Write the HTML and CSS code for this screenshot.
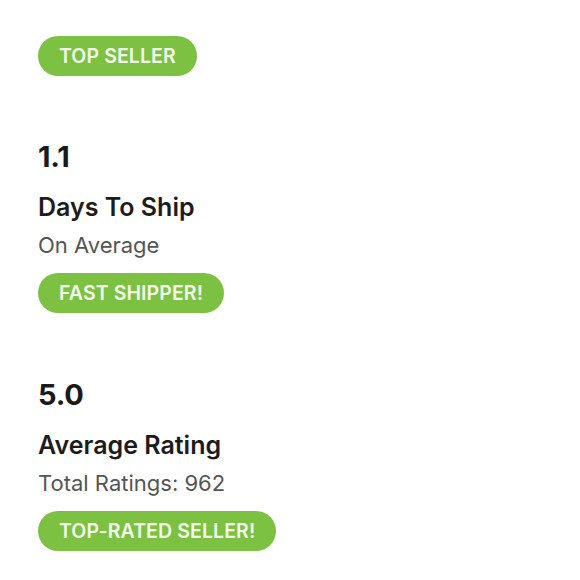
FILE: index.html
```html
<!DOCTYPE html>
<html>
<head>
<meta charset="utf-8">
<link rel="stylesheet" href="styles.css">
</head>
<body>
<div class="page">
  <div class="badge b1">TOP SELLER</div>
  <section class="stat">
    <div class="num">1.1</div>
    <div class="title">Days To Ship</div>
    <div class="sub">On Average</div>
    <div class="badge">FAST SHIPPER!</div>
  </section>
  <section class="stat">
    <div class="num">5.0</div>
    <div class="title">Average Rating</div>
    <div class="sub">Total Ratings: 962</div>
    <div class="badge">TOP-RATED SELLER!</div>
  </section>
</div>
</body>
</html>
```
FILE: styles.css
```css
html, body {
  margin: 0;
  padding: 0;
  background: #ffffff;
}
.page {
  font-family: "Inter", "Liberation Sans", sans-serif;
  padding: 36px 0 0 38px;
  display: flex;
  flex-direction: column;
  align-items: flex-start;
}
.badge {
  height: 40px;
  line-height: 40px;
  border-radius: 20px;
  padding: 0 21px;
  background: #7cc142;
  color: #f3f9ec;
  font-size: 19.5px;
  font-weight: 600;
  letter-spacing: 0.1px;
  white-space: nowrap;
}
.stat {
  display: flex;
  flex-direction: column;
  align-items: flex-start;
  margin-top: 65px;
}
.stat + .stat {
  margin-top: 66px;
}
.num {
  font-size: 29px;
  font-weight: 700;
  line-height: 32px;
  color: #1a1a1a;
  letter-spacing: -0.2px;
}
.title {
  font-size: 25px;
  font-weight: 600;
  line-height: 30px;
  color: #1c1c1c;
  margin-top: 19px;
}
.sub {
  font-size: 22px;
  line-height: 26px;
  color: #555555;
  margin-top: 10px;
}
.stat .badge {
  margin-top: 15px;
}
```
